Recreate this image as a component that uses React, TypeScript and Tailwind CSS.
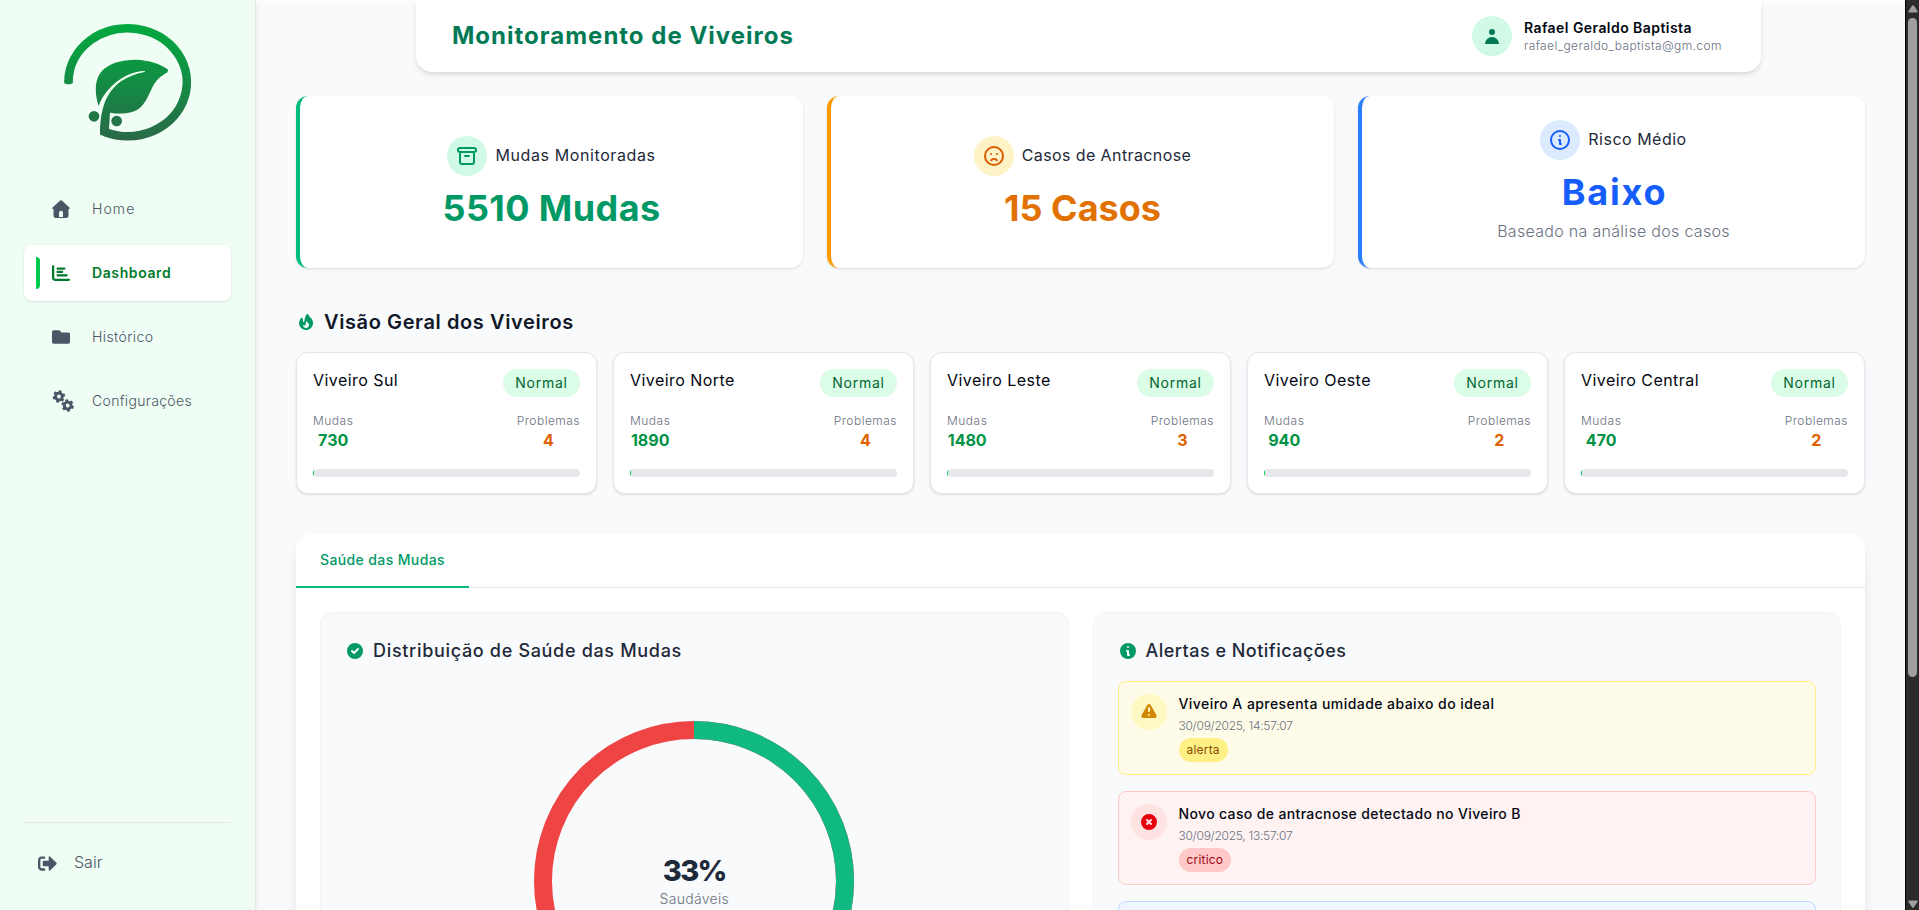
import type { ReactNode } from "react";
import {
  HiCheckCircle,
  HiExclamation,
  HiFire,
  HiInformationCircle,
  HiOutlineArchive,
  HiOutlineEmojiSad,
  HiOutlineInformationCircle,
  HiUser,
  HiXCircle,
} from "react-icons/hi";
import { FaChartBar } from "react-icons/fa6";
import { FaFolder, FaSignOutAlt } from "react-icons/fa";

function Logo() {
  return (
    <svg viewBox="0 0 432 402" className="h-[134px] w-36">
      <defs>
        <linearGradient id="leaf" gradientUnits="userSpaceOnUse" x1="0" y1="24" x2="0" y2="374">
          <stop offset="0" stopColor="#03a93f" />
          <stop offset="0.5" stopColor="#138d44" />
          <stop offset="0.8" stopColor="#207646" />
          <stop offset="1" stopColor="#2b6a48" />
        </linearGradient>
      </defs>
      <path
        d="M37.500 192 A177.500 162 0 1 1 146 348"
        fill="none"
        stroke="url(#leaf)"
        strokeWidth="26"
      />
      <path
        d="M24.500 191 L24.500 199 Q26 205 37 205 Q49 205 50.500 199 L50.500 191 Z"
        fill="url(#leaf)"
      />
      <path
        d="M128 270 C118 240 114 200 131 174 C152 141 198 131 240 131 C278 132 314 144 335 160 Q338 166 333 170 C316 178 300 192 290 212 C279 234 270 260 251 276 C230 294 195 295 162 290 L159 338 L165 344 L150 362 L132 356 C132 275 150 190 266 168 Q270 165 264 165 C205 168 148 215 128 270 Z"
        fill="url(#leaf)"
      />
      <circle cx="114" cy="301" r="16" fill="url(#leaf)" />
      <circle cx="182" cy="315" r="16" fill="url(#leaf)" />
    </svg>
  );
}

function HomeIcon() {
  return (
    <svg viewBox="0 0 18 18" className="h-[18px] w-[18px]" fill="currentColor">
      <path
        fillRule="evenodd"
        d="M8.200 .6 Q9 -.1 9.800 .6 L17.500 7.600 Q18.300 8.700 17 9 L16.500 9 V15.500 Q16.500 18 14 18 H4 Q1.500 18 1.500 15.500 V9 L1 9 Q-.3 8.700 .5 7.600 Z M7 17 H11 V13 Q11 10.800 9 10.800 Q7 10.800 7 13 Z"
      />
    </svg>
  );
}

function Gear({ x, y, turn }: { x: number; y: number; turn: number }) {
  return (
    <g transform={`translate(${x} ${y}) rotate(${turn})`} stroke="currentColor" fill="none">
      <circle r="3.400" strokeWidth="2.900" />
      {[0, 60, 120].map((a) => (
        <g key={a} transform={`rotate(${a})`} strokeWidth="2.900">
          <path d="M0 -6.200 V-4 M0 4 V6.200" />
        </g>
      ))}
    </g>
  );
}

function GearsIcon() {
  return (
    <svg viewBox="0 0 22 22" className="h-[22px] w-[22px]">
      <Gear x={6.9} y={6.5} turn={14} />
      <Gear x={15.7} y={15.5} turn={-10} />
    </svg>
  );
}

function NavItem({ icon, label, active }: { icon: ReactNode; label: ReactNode; active?: boolean }) {
  return (
    <a
      className={
        active
          ? "flex h-14 items-center rounded-lg bg-white pl-3 text-sm font-semibold text-[#007a2a] shadow-sm"
          : "flex h-14 items-center rounded-lg pl-3 text-sm font-[350] text-gray-600"
      }
    >
      <span className={active ? "h-8 w-1 rounded-r bg-[#00c950]" : "h-8 w-1"} />
      <span className="ml-3 flex w-10 items-center">{icon}</span>
      {label}
    </a>
  );
}

function Sidebar() {
  return (
    <aside className="z-10 flex w-64 shrink-0 flex-col border-r border-gray-200 bg-green-50 px-6 shadow-md">
      <div className="mt-4 ml-8">
        <Logo />
      </div>
      <nav className="mt-[31px] flex w-[207px] flex-col gap-2">
        <NavItem icon={<HomeIcon />} label={<span className="tracking-[1.1px]">Home</span>} />
        <NavItem
          active
          icon={<FaChartBar className="text-lg" />}
          label={<span className="tracking-[0.6px]">Dashboard</span>}
        />
        <NavItem
          icon={<FaFolder className="text-lg" />}
          label={<span className="tracking-[0.4px]">Histórico</span>}
        />
        <NavItem
          icon={<GearsIcon />}
          label={<span className="tracking-[0.33px]">Configurações</span>}
        />
      </nav>
      <div className="mt-auto flex h-[88px] w-[207px] border-t border-gray-200 pt-[27px] pl-3.5 text-gray-600">
        <FaSignOutAlt className="mt-1 text-[19px]" />
        <span className="ml-[17px] text-base font-[350]">Sair</span>
      </div>
    </aside>
  );
}

function Header() {
  return (
    <header className="ml-40 flex h-[72px] w-[1345px] items-center justify-between rounded-b-2xl bg-white px-9 shadow-md">
      <h1 className="text-2xl font-bold tracking-[1px] text-emerald-700">
        Monitoramento de Viveiros
      </h1>
      <div className="flex items-center gap-3">
        <span className="flex h-10 w-10 items-center justify-center rounded-full bg-emerald-100 text-emerald-700">
          <HiUser className="text-xl" />
        </span>
        <div className="w-[201px] pt-0.5 whitespace-nowrap">
          <p className="text-sm leading-[18px] font-semibold tracking-[0.44px] text-gray-950">
            Rafael Geraldo Baptista
          </p>
          <p className="text-xs leading-[18px] font-[350] tracking-[0.41px] text-gray-500">
            rafael_geraldo_baptista@gm.com
          </p>
        </div>
      </div>
    </header>
  );
}

function StatCard({
  border,
  badge,
  icon,
  label,
  value,
  note,
}: {
  border: string;
  badge: string;
  icon: ReactNode;
  label: ReactNode;
  value: ReactNode;
  note?: ReactNode;
}) {
  return (
    <section
      className={`flex h-[172px] flex-col items-center justify-center rounded-xl border-l-4 bg-white shadow-sm ${border}`}
    >
      <div className="flex items-center gap-2 text-base text-gray-800">
        <span className={`flex h-10 w-10 items-center justify-center rounded-full text-2xl ${badge}`}>
          {icon}
        </span>
        <span className="pb-0.5">{label}</span>
      </div>
      <div className="mt-3 text-4xl leading-10 font-bold">{value}</div>
      {note}
    </section>
  );
}

const nurseries = [
  { name: "Viveiro Sul", mudas: 730, problemas: 4 },
  { name: "Viveiro Norte", mudas: 1890, problemas: 4 },
  { name: "Viveiro Leste", mudas: 1480, problemas: 3 },
  { name: "Viveiro Oeste", mudas: 940, problemas: 2 },
  { name: "Viveiro Central", mudas: 470, problemas: 2 },
];

function NurseryCard({ name, mudas, problemas }: (typeof nurseries)[number]) {
  return (
    <section className="h-[142px] rounded-xl border border-gray-200 bg-white p-4 shadow-sm">
      <div className="flex items-start justify-between">
        <h3 className="text-base leading-[22px] tracking-[0.45px] text-gray-950">{name}</h3>
        <span className="flex h-7 w-[77px] items-center justify-center rounded-full bg-green-100 text-sm tracking-[0.75px] text-green-800">
          Normal
        </span>
      </div>
      <div className="mt-4 flex justify-between text-center">
        <div>
          <p className="text-xs font-[350] tracking-[0.5px] text-gray-500">Mudas</p>
          <p className="text-base leading-[22px] font-bold text-[#009245]">{mudas}</p>
        </div>
        <div>
          <p className="text-xs font-[350] tracking-[0.47px] text-gray-500">Problemas</p>
          <p className="text-base leading-[22px] font-bold text-[#e06000]">{problemas}</p>
        </div>
      </div>
      <div className="mt-[18px] h-2 overflow-hidden rounded-full bg-gray-200">
        <div
          className="h-2 bg-[#00c950]"
          style={{ width: `${Math.max(0.5, (problemas / mudas) * 100)}%` }}
        />
      </div>
    </section>
  );
}

function Donut() {
  const r = 151;
  const length = 2 * Math.PI * r;
  return (
    <div className="relative mx-auto mt-14 h-80 w-80">
      <svg viewBox="0 0 320 320" className="h-80 w-80 -rotate-90" fill="none" strokeWidth="18">
        <circle cx="160" cy="160" r={r} stroke="#ef4444" />
        <circle
          cx="160"
          cy="160"
          r={r}
          stroke="#10b981"
          strokeDasharray={`${length * 0.33} ${length}`}
        />
      </svg>
      <div className="absolute inset-0 flex flex-col items-center justify-center">
        <span className="text-[29px] leading-9 font-extrabold tracking-[-1.7px] text-gray-800">
          33%
        </span>
        <span className="text-sm font-[350] tracking-[0.3px] text-gray-500">Saudáveis</span>
      </div>
    </div>
  );
}

function Alert({
  card,
  badge,
  tag,
  icon,
  title,
  date,
  kind,
}: {
  card: string;
  badge: string;
  tag: string;
  icon: ReactNode;
  title: ReactNode;
  date: string;
  kind: string;
}) {
  return (
    <li className={`flex h-[94px] gap-3 rounded-lg border p-3 ${card}`}>
      <span
        className={`flex h-9 w-9 shrink-0 items-center justify-center rounded-full text-xl ${badge}`}
      >
        {icon}
      </span>
      <div className="flex flex-col items-start gap-1">
        <p className="text-sm font-medium text-gray-950">{title}</p>
        <p className="text-xs font-[350] tracking-[-0.28px] text-gray-500">{date}</p>
        <span className={`flex h-6 items-center rounded-full px-2 text-xs tracking-[0.2px] ${tag}`}>
          {kind}
        </span>
      </div>
    </li>
  );
}

function PanelTitle({ icon, children }: { icon: ReactNode; children: ReactNode }) {
  return (
    <h3 className="flex items-center gap-2 text-lg leading-7 font-medium text-gray-800">
      <span className="text-xl text-emerald-600">{icon}</span>
      {children}
    </h3>
  );
}

function ScrollBar() {
  return (
    <div className="flex w-3.5 shrink-0 flex-col items-center border-l border-black bg-[#2b2b2b]">
      <svg viewBox="0 0 10 8" className="mt-[5px] h-2 w-2.5" fill="#9f9f9f">
        <path d="M4 .8 Q5 -.4 6 .8 L9.600 6.200 Q10 7.600 8.800 7.600 H1.200 Q0 7.600 .4 6.200 Z" />
      </svg>
      <div className="mt-[5px] h-[659px] w-[9px] rounded-full bg-[#9f9f9f]" />
      <svg viewBox="0 0 10 8" className="mt-auto mb-0.5 h-2 w-2.5 rotate-180" fill="#9f9f9f">
        <path d="M4 .8 Q5 -.4 6 .8 L9.600 6.200 Q10 7.600 8.800 7.600 H1.200 Q0 7.600 .4 6.200 Z" />
      </svg>
    </div>
  );
}

export default function App() {
  return (
    <div className="flex h-[910px] w-full overflow-hidden bg-gray-50 font-['Inter',sans-serif]">
      <Sidebar />
      <main className="min-w-0 flex-1 shadow-[inset_0_1px_0_#ffffff]">
        <Header />
        <div className="px-10 pt-6">
          <div className="grid grid-cols-3 gap-6">
            <StatCard
              border="border-emerald-500"
              badge="bg-emerald-100 text-emerald-600"
              icon={<HiOutlineArchive />}
              label={<span className="tracking-[0.6px]">Mudas Monitoradas</span>}
              value={<span className="tracking-[0.4px] text-emerald-600">5510 Mudas</span>}
            />
            <StatCard
              border="border-amber-500"
              badge="bg-amber-100 text-[#dc5a00]"
              icon={<HiOutlineEmojiSad />}
              label={<span className="tracking-[0.4px]">Casos de Antracnose</span>}
              value={<span className="text-amber-600">15 Casos</span>}
            />
            <StatCard
              border="border-blue-500"
              badge="bg-blue-100 text-blue-600"
              icon={<HiOutlineInformationCircle />}
              label={<span className="tracking-[0.5px]">Risco Médio</span>}
              value={<span className="ml-0.5 tracking-[1.8px] text-blue-600">Baixo</span>}
              note={
                <p className="mt-[7px] mb-px text-base font-[350] tracking-[0.3px] text-gray-500">
                  Baseado na análise dos casos
                </p>
              }
            />
          </div>

          <h2 className="mt-10 flex items-center gap-2 text-xl leading-7 font-semibold tracking-[0.6px] text-gray-900">
            <HiFire className="text-emerald-600" />
            Visão Geral dos Viveiros
          </h2>
          <div className="mt-4 grid grid-cols-5 gap-4">
            {nurseries.map((n) => (
              <NurseryCard key={n.name} {...n} />
            ))}
          </div>

          <div className="mt-10 rounded-t-2xl bg-white shadow-lg">
            <div className="flex h-[54px] border-b border-gray-200">
              <button className="-mb-px flex items-start border-b-2 border-emerald-500 px-6 pt-4 text-sm font-medium tracking-[0.38px] text-emerald-600">
                Saúde das Mudas
              </button>
            </div>
            <div className="grid h-[560px] grid-cols-2 gap-6 p-6">
              <section className="rounded-xl border border-gray-100 bg-gray-50 p-6">
                <PanelTitle icon={<HiCheckCircle />}>
                  <span className="tracking-[0.68px]">Distribuição de Saúde das Mudas</span>
                </PanelTitle>
                <Donut />
              </section>
              <section className="rounded-xl border border-gray-100 bg-gray-50 p-6">
                <PanelTitle icon={<HiInformationCircle />}>
                  <span className="tracking-[0.48px]">Alertas e Notificações</span>
                </PanelTitle>
                <ul className="mt-4 flex flex-col gap-4">
                  <Alert
                    card="border-yellow-200 bg-yellow-50"
                    badge="bg-yellow-100 text-yellow-600"
                    tag="bg-yellow-200 text-yellow-800"
                    icon={<HiExclamation />}
                    title={
                      <span className="tracking-[0.44px]">
                        Viveiro A apresenta umidade abaixo do ideal
                      </span>
                    }
                    date="30/09/2025, 14:57:07"
                    kind="alerta"
                  />
                  <Alert
                    card="border-red-200 bg-red-50"
                    badge="bg-red-100 text-red-600"
                    tag="bg-red-200 text-red-800"
                    icon={<HiXCircle />}
                    title={
                      <span className="tracking-[0.36px]">
                        Novo caso de antracnose detectado no Viveiro B
                      </span>
                    }
                    date="30/09/2025, 13:57:07"
                    kind="critico"
                  />
                  <li className="h-[94px] rounded-lg border border-blue-200 bg-blue-50" />
                </ul>
              </section>
            </div>
          </div>
        </div>
      </main>
      <ScrollBar />
    </div>
  );
}
